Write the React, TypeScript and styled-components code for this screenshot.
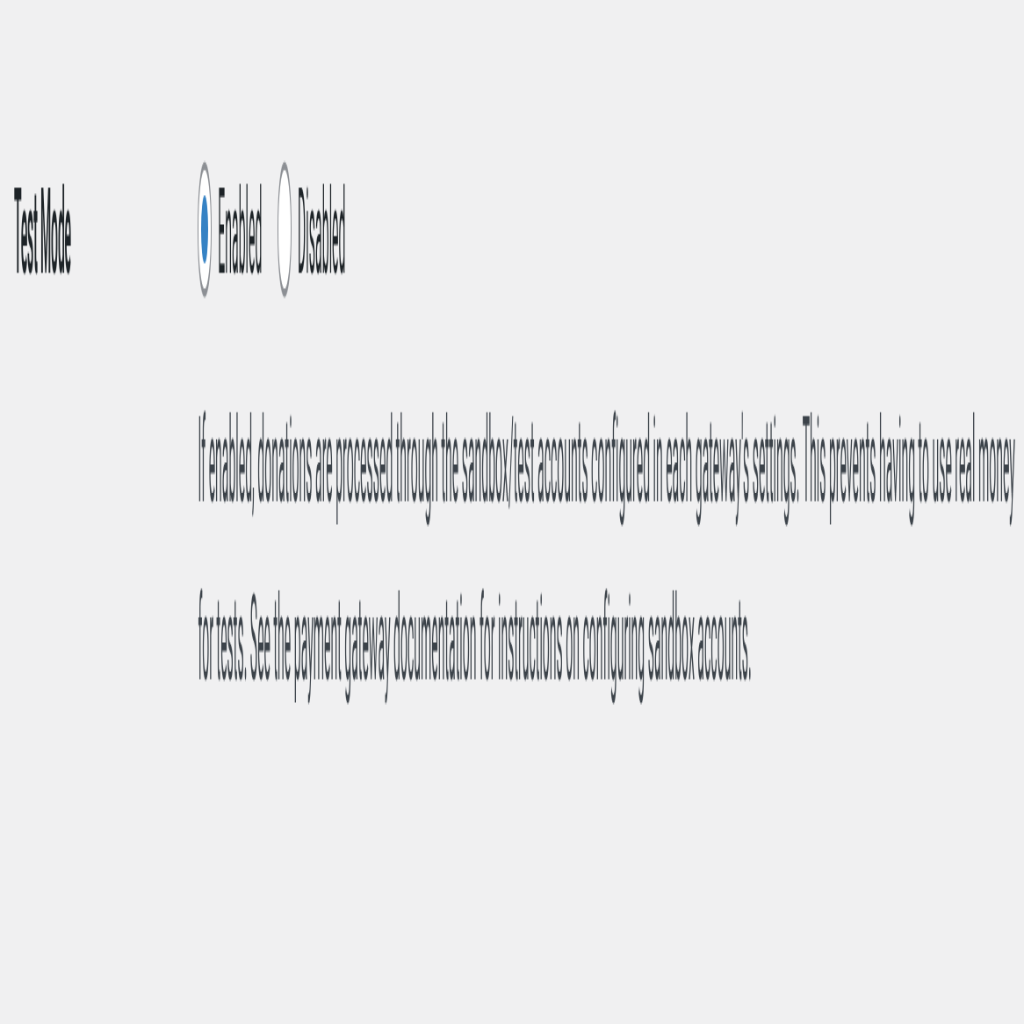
import React from 'react';
import styled, { createGlobalStyle } from 'styled-components';

const NATIVE_W = 1166;
const NATIVE_H = 120.5;

const Global = createGlobalStyle`
  html, body { margin: 0; padding: 0; background: #f0f0f1; overflow: hidden; }
  body { width: 1024px; height: 1024px; }
`;

const Viewport = styled.div`
  width: 1024px;
  height: 1024px;
  overflow: hidden;
  background: #f0f0f1;
`;

const Stage = styled.div`
  width: ${NATIVE_W}px;
  height: ${NATIVE_H}px;
  transform: scale(${1024 / NATIVE_W}, ${1024 / NATIVE_H});
  transform-origin: 0 0;
  will-change: transform;
  background: #f0f0f1;
  font-family: Roboto, "Noto Sans", "Liberation Sans", sans-serif;
  font-size: 14px;
  color: #3c434a;
  -webkit-font-smoothing: antialiased;
`;

const Row = styled.div`
  display: grid;
  grid-template-columns: 209.6px 1fr;
  padding: 17px 0 0 15.9px;
`;

const Label = styled.div`
  font-weight: 600;
  color: #1d2327;
  line-height: 20px;
  letter-spacing: -0.15px;
`;

const Field = styled.div`
  display: flex;
  flex-direction: column;
`;

const RadioGroup = styled.div`
  display: flex;
  align-items: center;
  gap: 18px;
  height: 20px;
`;

const Option = styled.label`
  display: inline-flex;
  align-items: center;
  gap: 6.7px;
  color: #1d2327;
  line-height: 20px;
  letter-spacing: 0.05px;
`;

const Radio = styled.input.attrs({ type: 'radio' })`
  appearance: none;
  -webkit-appearance: none;
  margin: 0;
  width: 16px;
  height: 15.5px;
  border: 1px solid #8c8f94;
  border-radius: 50%;
  background: #fff;
  box-sizing: border-box;
  display: inline-flex;
  align-items: center;
  justify-content: center;
  &:checked::before {
    content: '';
    width: 8px;
    height: 8px;
    border-radius: 50%;
    background: #3582c4;
  }
`;

const Description = styled.p`
  margin: 7px 0 0;
  max-width: 942px;
  line-height: 20.7px;
  color: #3c434a;
  letter-spacing: 0.01px;
`;

export default function App() {
  return (
    <>
      <Global />
      <Viewport>
        <Stage>
          <Row>
            <Label>Test Mode</Label>
            <Field>
              <RadioGroup>
                <Option>
                  <Radio name="test_mode" defaultChecked />
                  Enabled
                </Option>
                <Option>
                  <Radio name="test_mode" />
                  Disabled
                </Option>
              </RadioGroup>
              <Description>
                If enabled, donations are processed through the sandbox/test accounts configured in each gateway's settings. This prevents having to use real money for tests. See the payment gateway documentation for instructions on configuring sandbox accounts.
              </Description>
            </Field>
          </Row>
        </Stage>
      </Viewport>
    </>
  );
}
